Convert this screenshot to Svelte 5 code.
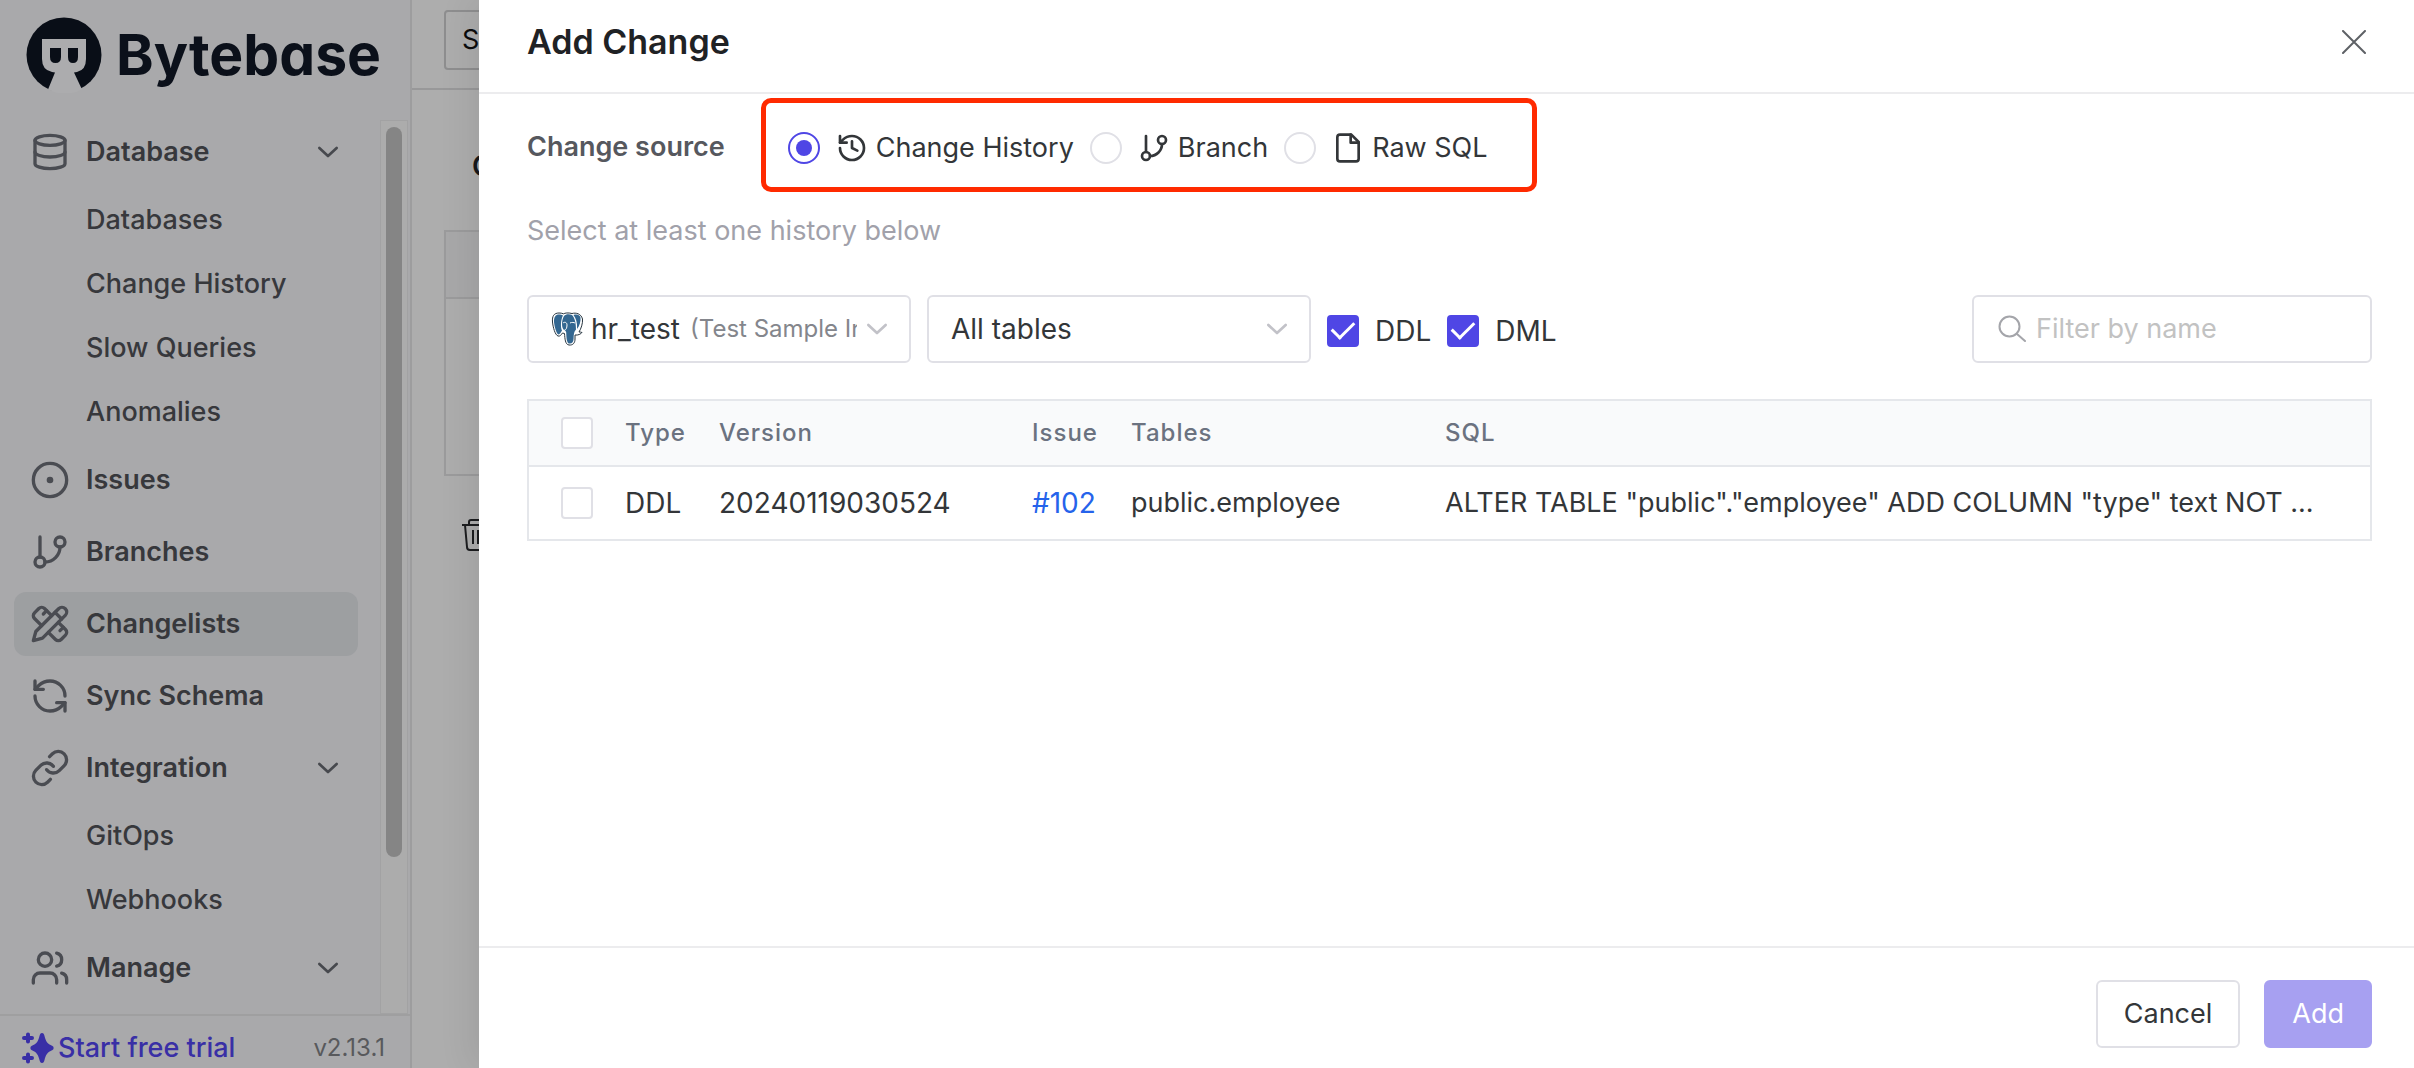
<script lang="ts">
  type Item = { label: string; icon?: string; open?: boolean; active?: boolean; child?: boolean };

  const items: Item[] = [
    { label: 'Database', icon: 'database', open: true },
    { label: 'Databases', child: true },
    { label: 'Change History', child: true },
    { label: 'Slow Queries', child: true },
    { label: 'Anomalies', child: true },
    { label: 'Issues', icon: 'issue' },
    { label: 'Branches', icon: 'branch' },
    { label: 'Changelists', icon: 'changelist', active: true },
    { label: 'Sync Schema', icon: 'sync' },
    { label: 'Integration', icon: 'link', open: true },
    { label: 'GitOps', child: true },
    { label: 'Webhooks', child: true },
    { label: 'Manage', icon: 'users', open: true },
  ];

  const sources = [
    { id: 'history', label: 'Change History' },
    { id: 'branch', label: 'Branch' },
    { id: 'file', label: 'Raw SQL' },
  ];

  let source = $state('history');
  let ddl = $state(true);
  let dml = $state(true);
</script>

{#snippet icon(name: string)}
  <svg class="icon" viewBox="0 0 24 24" aria-hidden="true">
    {#if name === 'database'}
      <ellipse cx="12" cy="5" rx="9" ry="3" /><path d="M3 5v14a9 3 0 0 0 18 0V5" /><path d="M3 12a9 3 0 0 0 18 0" />
    {:else if name === 'issue'}
      <circle cx="12" cy="12" r="10" /><circle cx="12" cy="12" r="1" />
    {:else if name === 'branch'}
      <path d="M6 3v12" /><circle cx="18" cy="6" r="3" /><circle cx="6" cy="18" r="3" /><path d="M18 9a9 9 0 0 1-9 9" />
    {:else if name === 'changelist'}
      <path d="m15 5 4 4" /><path d="M13 7 8.7 2.7a2.41 2.41 0 0 0-3.4 0L2.7 5.3a2.41 2.41 0 0 0 0 3.4L7 13" /><path d="m8 6 2-2" /><path d="m2 22 5.5-1.5L21.17 6.83a2.82 2.82 0 0 0-4-4L3.5 16.5Z" /><path d="m18 16 2-2" /><path d="m17 11 4.3 4.3c.94.94.94 2.46 0 3.4l-2.6 2.6c-.94.94-2.46.94-3.4 0L11 17" />
    {:else if name === 'sync'}
      <path d="M21 12a9 9 0 0 0-9-9 9.75 9.75 0 0 0-6.74 2.74L3 8" /><path d="M3 3v5h5" /><path d="M3 12a9 9 0 0 0 9 9 9.75 9.75 0 0 0 6.74-2.74L21 16" /><path d="M16 16h5v5" />
    {:else if name === 'link'}
      <path d="M10 13a5 5 0 0 0 7.54.54l3-3a5 5 0 0 0-7.07-7.07l-1.72 1.71" /><path d="M14 11a5 5 0 0 0-7.54-.54l-3 3a5 5 0 0 0 7.07 7.07l1.71-1.71" />
    {:else if name === 'users'}
      <circle cx="9" cy="7" r="4" /><path d="M2 21v-2a4 4 0 0 1 4-4h6a4 4 0 0 1 4 4v2" /><path d="M16 3.13a4 4 0 0 1 0 7.75" /><path d="M22 21v-2a4 4 0 0 0-3-3.87" />
    {:else if name === 'history'}
      <path d="M3 12a9 9 0 1 0 9-9 9.75 9.75 0 0 0-6.74 2.74L3 8" /><path d="M3 3v5h5" /><path d="M12 7v5l4 2" />
    {:else if name === 'file'}
      <path d="M14.500 2H6a2 2 0 0 0-2 2v16a2 2 0 0 0 2 2h12a2 2 0 0 0 2-2V7.500z" /><path d="M14 2v6h6" />
    {:else if name === 'chevron'}
      <path d="m5.500 9 6.500 6 6.500-6" />
    {/if}
  </svg>
{/snippet}

<div class="shell">
  <aside class="sidebar">
    <a class="brand" href="#home">
      <svg viewBox="0 0 76 76" aria-hidden="true">
        <circle cx="38" cy="38" r="37.500" fill="#090e17" />
        <path d="M16 22h44v20q0 11-9 13l-3 .5 8 17a38 38 0 0 1-34 0l7-17-3-.5q-10-2-10-13z" fill="#acacae" />
        <path d="M24 31h11v9q0 6-5.500 6t-5.500-6zM42 31h10v9q0 6-5 6t-5-6z" fill="#090e17" />
      </svg>
      <span>Bytebase</span>
    </a>
    <div class="scroller">
      <nav>
        {#each items as item}
          <a href="#nav" class:child={item.child} class:active={item.active}>
            {#if item.icon}{@render icon(item.icon)}{/if}
            <span>{item.label}</span>
            {#if item.open}<i class="caret">{@render icon('chevron')}</i>{/if}
          </a>
        {/each}
      </nav>
      <div class="track"><div class="thumb"></div></div>
    </div>
    <div class="trial">
      <a href="#trial">
        <svg viewBox="0 0 32 32" aria-hidden="true">
          <path d="M20 1c1.500 0 2 1 2.500 3 1.500 5.500 2.500 7.500 8 10 1.500.7 1.500 3.300 0 4-5.500 2.500-6.500 4.500-8 10-.5 2-1 3-2.500 3s-2-1-2.500-3c-1.500-5.500-2.500-7.500-8-10-1.500-.7-1.500-3.300 0-4 5.500-2.500 6.500-4.500 8-10 .5-2 1-3 2.500-3z" />
          <path class="plus" d="M6 2.500v7M2 6h8M6 22.500v7M2 26h8" />
        </svg>
        <span>Start free trial</span>
      </a>
      <span class="version">v2.13.1</span>
    </div>
  </aside>

  <main>
    <header><button type="button">S</button></header>
    <h1>C</h1>
    <div class="panel"><div class="panel-head"></div></div>
    <svg class="trash" viewBox="0 0 36 36" aria-hidden="true">
      <path d="M2 8h32M9 8V5q0-2 2-2h14q2 0 2 2v3M5 8l2 22q0 3 3 3h16q3 0 3-3l2-22M13 13v14M18 13v14M23 13v14" />
    </svg>
  </main>
</div>

<div class="drawer" role="dialog" aria-labelledby="drawer-title">
  <div class="drawer-head">
    <h2 id="drawer-title">Add Change</h2>
    <button type="button" class="close" aria-label="Close">
      <svg viewBox="0 0 24 24" aria-hidden="true"><path d="M1 1l22 22M23 1 1 23" /></svg>
    </button>
  </div>

  <div class="drawer-body">
    <div class="source">
      <span class="source-label" id="source-label">Change source</span>
      <div class="options" role="radiogroup" aria-labelledby="source-label">
        {#each sources as s}
          <label>
            <input type="radio" name="source" value={s.id} bind:group={source} />
            {@render icon(s.id)}
            <span>{s.label}</span>
          </label>
        {/each}
      </div>
    </div>

    <p class="hint">Select at least one history below</p>

    <div class="filters">
      <button type="button" class="select" aria-haspopup="listbox">
        <svg class="pg" viewBox="0 0 32 34" aria-hidden="true">
          <path class="rim" d="M8 1C3 1 1 4 1.500 10c.5 5 2.500 13 5.500 14 2 .6 3-1 4.500-3l2 .5c.5 5 .5 11 4.500 11.500 4 .4 6-2 6-6v-4c3 .5 6-1 7-2.500-1-.5-2-.5-3-.5 2-3 4-9 3.500-13C30 1.500 25 .5 21 1.500 17 .5 14 1 12.500 1.800 11 1.200 9.500 1 8 1z" />
          <path class="skin" d="M8 2.500C4.500 2.500 2.800 5 3 10c.4 4.500 2.500 12 4.500 12.500C9 22.500 10 20 11 18.500 9.500 16 9.500 8 12 3.500 10.500 2.800 9.500 2.500 8 2.500zM13 4c-2.500 4-2.500 11-.5 13.500 2 1 3 2 2.800 5C15.500 27 16 31 18 31.500c3 .4 4.500-1.500 4.600-5 .1-4 .3-7 2.400-9C25 12 24 6 21 3 18 2 15 2 13 4zM22.500 3c2.500 3.500 4 8 3.500 14 2.500-3 4-8 3.500-11.500C28.500 2.500 25.500 2 22.500 3z" />
          <path class="line" d="M12 11c2-1.500 4-.5 4 2 0 3-1 5-2.500 5M19 11c2-1 4-.5 5 0" />
        </svg>
        <span class="db">hr_test</span>
        <span class="instance">(Test Sample In</span>
        {@render icon('chevron')}
      </button>
      <button type="button" class="select" aria-haspopup="listbox">
        <span class="value">All tables</span>
        {@render icon('chevron')}
      </button>
      <label class="check"><input type="checkbox" bind:checked={ddl} /><span>DDL</span></label>
      <label class="check"><input type="checkbox" bind:checked={dml} /><span>DML</span></label>
      <label class="search">
        <svg viewBox="0 0 28 28" aria-hidden="true"><circle cx="11.500" cy="11.500" r="10" /><path d="m19 19 8 7" /></svg>
        <input type="text" placeholder="Filter by name" aria-label="Filter by name" />
      </label>
    </div>

    <table>
      <colgroup>
        <col class="c-check" /><col class="c-type" /><col class="c-version" /><col class="c-issue" /><col class="c-tables" /><col />
      </colgroup>
      <thead>
        <tr>
          <th><input type="checkbox" aria-label="Select all" /></th>
          <th>Type</th><th>Version</th><th>Issue</th><th>Tables</th><th>SQL</th>
        </tr>
      </thead>
      <tbody>
        <tr>
          <td><input type="checkbox" aria-label="Select 20240119030524" /></td>
          <td class="code">DDL</td>
          <td class="code">20240119030524</td>
          <td class="code"><a href="#issue-102">#102</a></td>
          <td>public.employee</td>
          <td class="sql">ALTER TABLE "public"."employee" ADD COLUMN "type" text NOT ...</td>
        </tr>
      </tbody>
    </table>
  </div>

  <div class="drawer-foot">
    <button type="button" class="cancel">Cancel</button>
    <button type="button" class="add" disabled>Add</button>
  </div>
</div>

<style>
  :global(body) {
    margin: 0;
    overflow: hidden;
    font-family: Inter, 'Liberation Sans', sans-serif;
    font-size: 27px;
    line-height: 40px;
    color: #333639;
  }
  :global(*) { box-sizing: border-box; }
  a { color: inherit; text-decoration: none; }
  button, input { font: inherit; color: inherit; }
  .icon {
    width: 32px;
    height: 32px;
    flex: none;
    fill: none;
    stroke: currentColor;
    stroke-width: 2;
    stroke-linecap: round;
    stroke-linejoin: round;
  }

  .shell { display: flex; height: 100vh; background: #adadad; }
  .sidebar {
    display: flex;
    flex-direction: column;
    flex: none;
    width: 412px;
    background: #a9a9ab;
    border-right: 2px solid #9d9d9e;
  }
  .brand { display: flex; align-items: center; gap: 14px; height: 120px; padding: 0 0 10px 26px; flex: none; }
  .brand svg { width: 76px; height: 76px; }
  .brand span {
    font-size: 57px;
    font-weight: 700;
    line-height: 64px;
    color: #0b101a;
    font-feature-settings: 'cv11';
  }
  .scroller { display: flex; flex: 1; min-height: 0; padding-right: 2px; }
  nav { display: flex; flex-direction: column; gap: 8px; flex: 1; padding: 0 22px 0 14px; overflow: hidden; }
  nav a {
    display: flex;
    align-items: center;
    flex: none;
    gap: 16px;
    height: 64px;
    padding: 0 14px 0 16px;
    border-radius: 12px;
    font-weight: 600;
    color: #37383c;
  }
  nav a > :global(.icon) { width: 40px; height: 40px; color: #4a4c52; }
  nav a.child { height: 56px; padding-left: 72px; font-weight: 500; }
  nav a.active { background: #9d9fa1; }
  .caret { display: flex; margin-left: auto; color: #47494e; }
  .track { width: 28px; padding: 6px 5px; background: #acacac; border: 1px solid #a2a2a3; }
  .thumb { width: 16px; height: 83%; border-radius: 8px; background: #858585; }
  .trial {
    display: flex;
    justify-content: space-between;
    flex: none;
    padding: 12px 25px 0 22px;
    border-top: 2px solid #9f9fa0;
  }
  .trial a { display: flex; align-items: center; gap: 4px; font-weight: 500; color: #392fa6; }
  .trial svg { width: 32px; height: 32px; fill: currentColor; }
  .plus { stroke: currentColor; stroke-width: 4; stroke-linecap: round; }
  .version { font-size: 24px; color: #58595c; }

  main { flex: 1; min-width: 0; }
  main header { height: 90px; padding: 10px 32px; border-bottom: 2px solid #989899; }
  main header button {
    width: 160px;
    height: 60px;
    padding: 0 16px;
    background: none;
    border: 2px solid #8e8e8f;
    border-radius: 4px;
    text-align: left;
    color: #0c0c0d;
  }
  main h1 { margin: 56px 0 44px 60px; font-size: 28px; font-weight: 600; line-height: 40px; color: #18191b; }
  .panel { height: 246px; margin-left: 32px; border: 2px solid #9b9b9c; }
  .panel-head { height: 67px; background: #a8a8a9; border-bottom: 2px solid #9b9b9c; }
  .trash { display: block; width: 36px; height: 36px; margin: 41px 0 0 48px; fill: none; stroke: #1c1d1f; stroke-width: 2; }

  .drawer {
    position: absolute;
    inset: 0 0 0 479px;
    display: flex;
    flex-direction: column;
    background: #fff;
    box-shadow: -8px 0 32px rgba(0, 0, 0, 0.08);
  }
  .drawer-head {
    display: flex;
    align-items: center;
    justify-content: space-between;
    padding: 20px 48px 28px;
    border-bottom: 2px solid #ececee;
  }
  h2 { margin: 0; font-size: 34px; font-weight: 600; line-height: 44px; color: #1f2225; }
  .close { display: flex; padding: 0; background: none; border: 0; }
  .close svg { width: 24px; height: 24px; fill: none; stroke: #5e6166; stroke-width: 2; stroke-linecap: round; }

  .drawer-body { flex: 1; padding: 4px 42px 0 48px; }
  .source { display: flex; align-items: baseline; gap: 36px; }
  .source-label { font-weight: 600; color: #56585e; }
  .options {
    display: flex;
    gap: 16px;
    padding: 28px 44px 22px 22px;
    border: 5px solid #ff2a00;
    border-radius: 10px;
  }
  .options label { display: flex; align-items: center; gap: 16px; white-space: nowrap; line-height: 34px; }
  .options label span { margin-left: -8px; }
  input[type='radio'], input[type='checkbox'] {
    appearance: none;
    flex: none;
    display: grid;
    place-items: center;
    width: 32px;
    height: 32px;
    margin: 0;
    background: #fff;
    border: 2px solid #e0e0e6;
    border-radius: 50%;
  }
  input[type='radio']:checked { border-color: #4f46e5; }
  input[type='radio']:checked::before { content: ''; width: 16px; height: 16px; border-radius: 50%; background: #4f46e5; }
  input[type='checkbox'] { border-radius: 4px; }
  input[type='checkbox']:checked { background: #4f46e5; border-color: #4f46e5; }
  input[type='checkbox']:checked::before {
    content: '';
    width: 19px;
    height: 10px;
    margin-top: -6px;
    border: solid #fff;
    border-width: 0 0 3px 3px;
    rotate: -45deg;
  }
  .hint { margin: 19px 0 44px; color: #a1a1aa; }

  .filters { display: flex; align-items: center; gap: 16px; }
  .select {
    display: flex;
    align-items: center;
    width: 384px;
    height: 68px;
    padding: 0 16px 0 22px;
    background: #fff;
    border: 2px solid #e0e0e6;
    border-radius: 6px;
    font-size: 28px;
    text-align: left;
    white-space: nowrap;
  }
  .select > :global(.icon) { margin-left: auto; color: #c2c2c8; stroke-width: 2; }
  .pg { width: 32px; height: 34px; flex: none; margin-right: 8px; }
  .rim { fill: #fff; stroke: #26343f; stroke-width: 1; }
  .skin { fill: #336791; }
  .line { fill: none; stroke: #fff; stroke-width: 1; }
  .instance { overflow: hidden; min-width: 0; margin: 0 4px 0 10px; font-size: 24px; color: #84868c; }
  .check { display: flex; align-items: center; gap: 16px; padding-top: 3px; font-size: 28px; }
  .search {
    display: flex;
    align-items: center;
    gap: 10px;
    width: 400px;
    height: 68px;
    margin-left: auto;
    padding: 0 24px;
    border: 2px solid #e0e0e6;
    border-radius: 6px;
  }
  .search svg { width: 28px; height: 28px; flex: none; fill: none; stroke: #a4a5aa; stroke-width: 2; stroke-linecap: round; }
  .search input { flex: 1; min-width: 0; padding: 0; border: 0; outline: 0; background: none; }
  .search input::placeholder { color: #c2c2c2; opacity: 1; }

  table { width: 100%; margin-top: 36px; table-layout: fixed; border-collapse: collapse; border: 2px solid #e5e7eb; }
  .c-check { width: 81px; }
  .c-type { width: 94px; }
  .c-version { width: 313px; }
  .c-issue { width: 99px; }
  .c-tables { width: 314px; }
  th, td { padding: 0 0 0 16px; text-align: left; white-space: nowrap; vertical-align: middle; }
  th:first-child, td:first-child { padding-left: 32px; }
  th { height: 66px; background: #f9fafb; border-bottom: 2px solid #e5e7eb; font-size: 24px; font-weight: 500; letter-spacing: 1px; color: #6b7280; }
  td { height: 74px; }
  td.code { font-size: 28px; }
  td.sql { overflow: hidden; text-overflow: ellipsis; padding-right: 32px; }
  td a { color: #2563eb; }

  .drawer-foot {
    display: flex;
    justify-content: flex-end;
    gap: 24px;
    padding: 32px 42px 20px;
    border-top: 2px solid #ececee;
  }
  .drawer-foot button { height: 68px; padding: 0 26px; border: 2px solid #e0e0e6; border-radius: 6px; background: #fff; }
  .drawer-foot .add { background: #a7a0f1; border-color: #a7a0f1; color: #fff; }
</style>
